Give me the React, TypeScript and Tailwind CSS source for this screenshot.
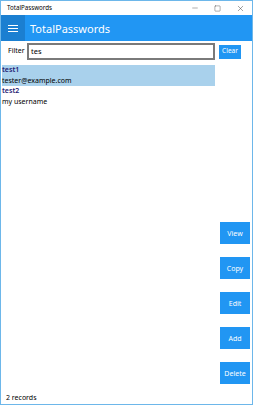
import { Minus, Square, X } from 'lucide-react';

const entries = [
  { title: 'test1', user: 'tester@example.com', selected: true },
  { title: 'test2', user: 'my username', selected: false },
];

const actions = ['View', 'Copy', 'Edit', 'Add', 'Delete'];

export default function App() {
  return (
    <div
      className="w-[253px] h-[405px] bg-white border border-[#6db7ea] flex flex-col overflow-hidden text-black"
      style={{ fontFamily: '"Segoe UI", "Noto Sans", sans-serif' }}
    >
      {/* title bar */}
      <div className="h-[14px] flex items-center justify-between shrink-0">
        <span className="pl-[6px] text-[6.2px] leading-none">TotalPasswords</span>
        <div className="flex items-center h-full text-[#333]">
          <div className="w-[23px] flex justify-center"><Minus size={8} strokeWidth={1.2} /></div>
          <div className="w-[23px] flex justify-center"><Square size={7} strokeWidth={1.3} /></div>
          <div className="w-[23px] flex justify-center"><X size={9} strokeWidth={1.2} /></div>
        </div>
      </div>

      {/* app header */}
      <div className="h-[26px] bg-[#2196f3] flex items-center shrink-0">
        <div className="w-[24px] h-full bg-[#1b7fd1] flex flex-col items-center justify-center gap-[2px]">
          <span className="block w-[10px] h-[1px] bg-white" />
          <span className="block w-[10px] h-[1px] bg-white" />
          <span className="block w-[10px] h-[1px] bg-white" />
        </div>
        <span className="pl-[5px] text-white text-[11px] leading-none">TotalPasswords</span>
      </div>

      {/* filter */}
      <div className="flex items-center pt-[2px] h-[19px] shrink-0">
        <span className="pl-[7px] w-[26px] text-[7px]">Filter</span>
        <div className="w-[188px] h-[17px] border-2 border-[#7a7a7a] flex items-center pl-[2px] text-[7.5px]">tes</div>
        <button className="ml-[4px] w-[22px] h-[14px] bg-[#2196f3] text-white text-[6.5px] leading-none flex items-center justify-center">Clear</button>
      </div>

      {/* body */}
      <div className="flex flex-1 pt-[5px]">
        <div className="w-[214px] pl-[1px]">
          {entries.map((e) => (
            <div key={e.title} className={e.selected ? 'bg-[#a9d1ec]' : ''}>
              <div className="text-[7px] leading-[10.5px] font-semibold text-[#1f1a74]">{e.title}</div>
              <div className="text-[7px] leading-[10.5px]">{e.user}</div>
            </div>
          ))}
        </div>
        <div className="flex-1 flex flex-col items-end justify-end gap-[13px] pr-[2px] pb-[6px]">
          {actions.map((a) => (
            <button key={a} className="w-[30px] h-[22px] bg-[#2196f3] text-white text-[7px] leading-none flex items-center justify-center">
              {a}
            </button>
          ))}
        </div>
      </div>

      {/* status */}
      <div className="h-[14px] pl-[5px] text-[7px] leading-none flex items-center shrink-0">2 records</div>
    </div>
  );
}
